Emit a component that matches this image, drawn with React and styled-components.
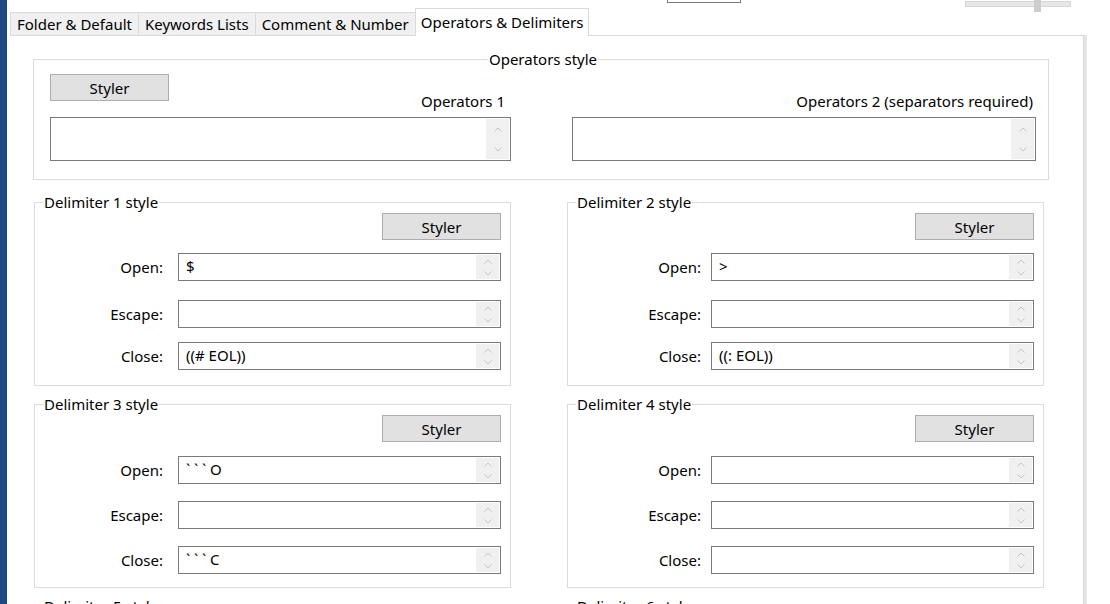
import React from "react"
import styled, { createGlobalStyle } from "styled-components"

const GlobalStyle = createGlobalStyle`
    *, *::before, *::after {
        box-sizing: border-box;
    }
    html, body {
        margin: 0;
        padding: 0;
        background: #ffffff;
    }
    body {
        font-family: "Noto Sans", "Open Sans", sans-serif;
        font-size: 15px;
        color: #000000;
    }
`

const Page = styled.div`
    display: flex;
    width: 1110px;
    height: 604px;
    overflow: hidden;
    background: #ffffff;
`

const Desktop = styled.div`
    flex: none;
    width: 7px;
    background: #1c4a80;
`

const Main = styled.div`
    flex: 1;
    min-width: 0;
    display: flex;
    flex-direction: column;
    padding-left: 3px;
`

const TopStrip = styled.div`
    flex: none;
    height: 8px;
    display: flex;
    align-items: flex-start;
`

const ComboEdge = styled.div`
    margin-left: 657px;
    width: 74px;
    height: 3px;
    border: 1px solid #7a7a7a;
    border-top: none;
`

const SliderTrack = styled.div`
    position: relative;
    margin-left: 224px;
    margin-top: 1px;
    width: 106px;
    height: 6px;
    background: #e7e7e7;
    border: 1px solid #d6d6d6;
`

const SliderThumb = styled.div`
    position: absolute;
    left: 68px;
    top: -2px;
    width: 7px;
    height: 12px;
    background: #cdcdcd;
`

const TabBar = styled.div`
    flex: none;
    height: 28px;
    display: flex;
    align-items: flex-end;
    position: relative;
    z-index: 1;
`

const Tab = styled.div`
    display: flex;
    align-items: center;
    justify-content: center;
    height: ${props => props.active ? "28px" : "23px"};
    margin-bottom: ${props => props.active ? "0" : "1px"};
    margin-right: -1px;
    padding: ${props => props.active ? "0 5px 2px" : "0 6px 1px"};
    background: ${props => props.active ? "#ffffff" : "#f0f0f0"};
    border: 1px solid #d9d9d9;
    border-bottom: none;
    white-space: nowrap;
    line-height: 18px;
`

const Panel = styled.div`
    flex: 1;
    width: 1074px;
    margin-top: -1px;
    padding: 14px 0 0 23px;
    border-top: 1px solid #d9d9d9;
    border-right: 1px solid #d9d9d9;
    box-shadow: 3px 0 0 #e5e5e5;
`

const Group = styled.fieldset`
    margin: 0;
    min-width: 0;
    border: 1px solid #dcdcdc;
`

const OpsGroup = styled(Group)`
    width: 1016px;
    padding: 0 12px 18px 16px;
`

const Legend = styled.legend`
    padding: 0 1px;
    margin: ${props => props.centered ? "0 auto" : "0 0 0 8px"};
    line-height: 18px;
    font-size: 15px;
`

const OpsGrid = styled.div`
    display: grid;
    grid-template-columns: 461px 464px;
    column-gap: 61px;
`

const OpsColumn = styled.div`
    display: flex;
    flex-direction: column;
`

const OpsHeader = styled.div`
    display: flex;
    justify-content: space-between;
    align-items: flex-end;
    height: 42px;
    margin-bottom: 7px;
    padding-top: 6px;
    padding-right: ${props => props.inset}px;
`

const Caption = styled.span`
    margin-left: auto;
    line-height: 18px;
    white-space: nowrap;
`

const StylerButton = styled.button`
    align-self: ${props => props.alignEnd ? "flex-end" : "flex-start"};
    width: 119px;
    height: 27px;
    padding: 0;
    margin: 0;
    background: #e1e1e1;
    border: 1px solid #adadad;
    font-family: inherit;
    font-size: 15px;
    color: #000000;
    line-height: 18px;
`

const DelimGrid = styled.div`
    display: grid;
    grid-template-columns: 477px 477px;
    column-gap: 56px;
    row-gap: 9px;
    margin: 13px 0 0 1px;
`

const DelimGroup = styled(Group)`
    height: 193px;
    padding: 0 9px 0 0;
    display: flex;
    flex-direction: column;
`

const DelimBody = styled.div`
    display: flex;
    flex-direction: column;
    padding-top: 2px;
`

const FieldRow = styled.div`
    display: flex;
    align-items: center;
    justify-content: flex-end;
    gap: ${props => props.gap}px;
    margin-top: ${props => props.top}px;
`

const FieldLabel = styled.span`
    line-height: 18px;
    white-space: nowrap;
`

const TextBox = styled.div`
    display: flex;
    align-items: center;
    width: ${props => props.wide ? "100%" : "323px"};
    height: ${props => props.tall ? "44px" : "28px"};
    padding-left: 7px;
    border: 1px solid #7a7a7a;
    background: #ffffff;
`

const Value = styled.span`
    flex: 1;
    line-height: 18px;
    padding-bottom: 2px;
    white-space: pre;
`

const Tick = styled.span`
    display: inline-block;
    width: 8px;
`

const Spinner = styled.div`
    align-self: stretch;
    width: 23px;
    margin: 1px 1px 1px 0;
    background: #f0f0f0;
    display: flex;
    flex-direction: column;
    justify-content: space-around;
    align-items: center;
`

const Chevron = ({ down }) =>
    <svg width="8" height="5" viewBox="0 0 8 5">
        <polyline
            points={down ? "0.5,0.5 4,4 7.5,0.5" : "0.5,4.5 4,1 7.5,4.5"}
            fill="none"
            stroke="#c4c4c4"
            strokeWidth="1"
        />
    </svg>

// backticks are wide in the original UI font, give each its own cell
const renderValue = value =>
    value.split(/(`)/).filter(Boolean).map((part, i) =>
        part === "`" ? <Tick key={i}>`</Tick> : part
    )

const Field = ({ value, tall, wide }) =>
    <TextBox tall={tall} wide={wide}>
        <Value>{renderValue(value)}</Value>
        <Spinner>
            <Chevron />
            <Chevron down />
        </Spinner>
    </TextBox>

const tabs = [
    { label: "Folder & Default" },
    { label: "Keywords Lists" },
    { label: "Comment & Number" },
    { label: "Operators & Delimiters", active: true }
]

const delimiters = [
    { n: 1, gap: 15, tops: [13, 19, 14], open: "$", escape: "", close: "((# EOL))" },
    { n: 2, gap: 10, tops: [13, 19, 14], open: ">", escape: "", close: "((: EOL))" },
    { n: 3, gap: 15, tops: [14, 17, 17], open: "```O", escape: "", close: "```C" },
    { n: 4, gap: 10, tops: [14, 17, 17], open: "", escape: "", close: "" },
    { n: 5, gap: 15, tops: [14, 17, 17], open: "", escape: "", close: "" },
    { n: 6, gap: 10, tops: [14, 17, 17], open: "", escape: "", close: "" }
]

const DelimiterStyle = ({ d }) =>
    <DelimGroup>
        <Legend>Delimiter {d.n} style</Legend>
        <DelimBody>
            <StylerButton alignEnd>Styler</StylerButton>
            {["Open", "Escape", "Close"].map((name, i) =>
                <FieldRow key={name} gap={d.gap} top={d.tops[i]}>
                    <FieldLabel>{name}:</FieldLabel>
                    <Field value={d[name.toLowerCase()]} />
                </FieldRow>
            )}
        </DelimBody>
    </DelimGroup>

const App = () =>
    <>
        <GlobalStyle />
        <Page>
            <Desktop />
            <Main>
                <TopStrip>
                    <ComboEdge />
                    <SliderTrack>
                        <SliderThumb />
                    </SliderTrack>
                </TopStrip>
                <TabBar>
                    {tabs.map(tab =>
                        <Tab key={tab.label} active={tab.active}>{tab.label}</Tab>
                    )}
                </TabBar>
                <Panel>
                    <OpsGroup>
                        <Legend centered>Operators style</Legend>
                        <OpsGrid>
                            <OpsColumn>
                                <OpsHeader inset={6}>
                                    <StylerButton>Styler</StylerButton>
                                    <Caption>Operators 1</Caption>
                                </OpsHeader>
                                <Field tall wide value="" />
                            </OpsColumn>
                            <OpsColumn>
                                <OpsHeader inset={3}>
                                    <Caption>Operators 2 (separators required)</Caption>
                                </OpsHeader>
                                <Field tall wide value="" />
                            </OpsColumn>
                        </OpsGrid>
                    </OpsGroup>
                    <DelimGrid>
                        {delimiters.map(d =>
                            <DelimiterStyle key={d.n} d={d} />
                        )}
                    </DelimGrid>
                </Panel>
            </Main>
        </Page>
    </>

export default App
